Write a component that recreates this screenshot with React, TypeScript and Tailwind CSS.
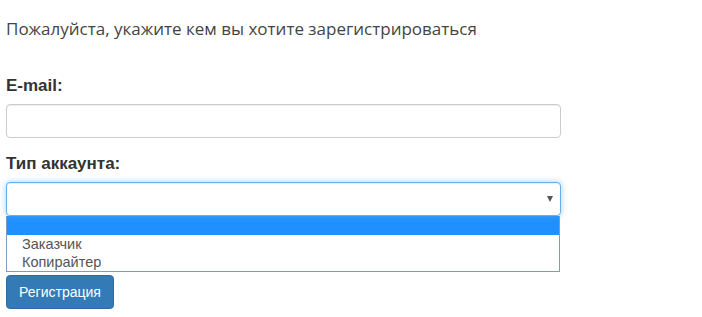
export default function App() {
  return (
    <div className="w-[702px] h-[317px] bg-white px-[6px] pt-[18px] overflow-hidden">
      <p className="text-[17px] leading-[22px] text-[#444] font-['Open_Sans',sans-serif]">
        Пожалуйста, укажите кем вы хотите зарегистрироваться
      </p>

      <form className="mt-[35px] w-[555px] font-['Liberation_Sans',Arial,sans-serif]">
        <label className="block text-[17px] leading-[22px] font-bold text-[#333]">E-mail:</label>
        <input
          type="text"
          className="mt-[7px] block w-full h-[34px] rounded-[4px] border border-[#ccc] bg-white px-3 text-[14px] shadow-[inset_0_1px_1px_rgba(0,0,0,0.075)] outline-none"
        />

        <label className="mt-[15px] block text-[17px] leading-[22px] font-bold text-[#333]">
          Тип аккаунта:
        </label>
        <div className="mt-[7px]">
          <div className="relative h-[34px] rounded-[4px] border border-[#66afe9] bg-white shadow-[inset_0_1px_1px_rgba(0,0,0,0.075),0_0_6px_rgba(102,175,233,0.6)]">
            <span className="absolute right-[7px] top-[13px] w-0 h-0 border-l-[3.5px] border-r-[3.5px] border-t-[6px] border-l-transparent border-r-transparent border-t-[#555]" />
          </div>
          <ul className="w-[554px] border border-[#7f9db9] border-t-0 bg-white text-[14.5px] leading-[18px] text-[#555]">
            <li className="h-[19px] bg-[#1e90ff]" />
            <li className="pl-[15px]">Заказчик</li>
            <li className="pl-[15px]">Копирайтер</li>
          </ul>
        </div>

        <button
          type="button"
          className="mt-[3px] block w-[108px] h-[34px] rounded-[4px] border border-[#2e6da4] bg-[#337ab7] text-white text-[14px]"
        >
          Регистрация
        </button>
      </form>
    </div>
  );
}
